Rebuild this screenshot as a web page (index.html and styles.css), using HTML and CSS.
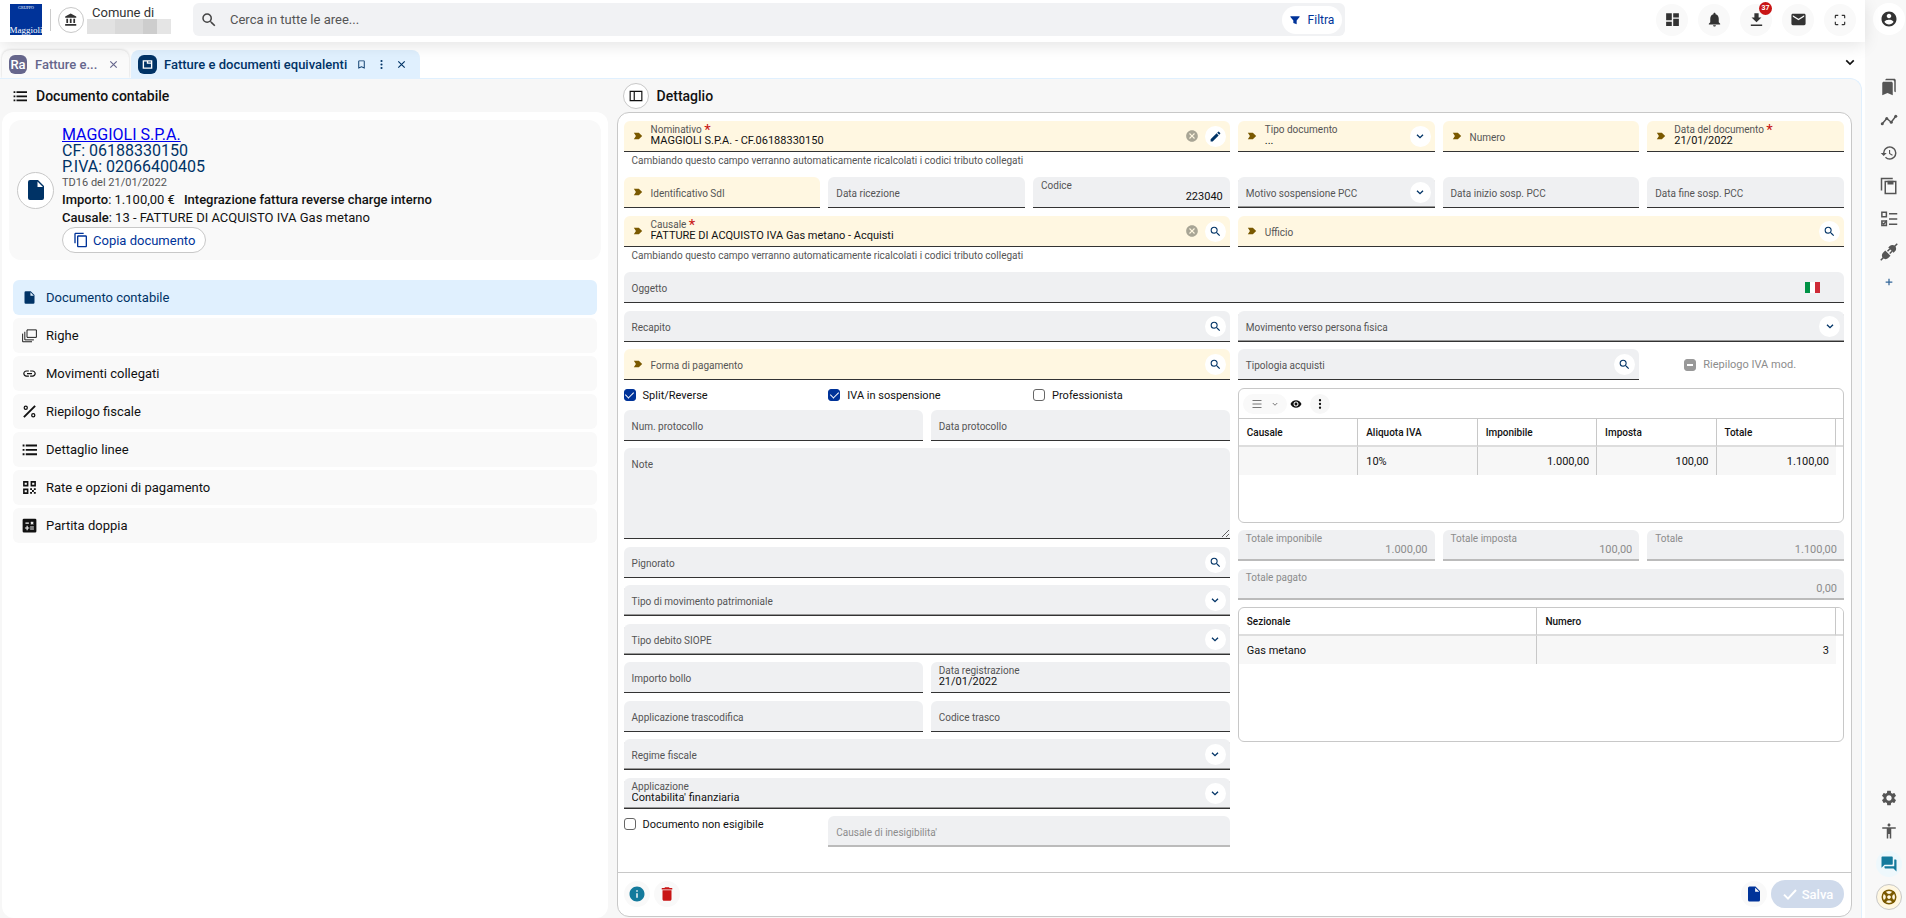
FILE: index.html
```html
<!DOCTYPE html>
<html lang="it">
<head>
    <meta charset="UTF-8">
    <meta name="viewport" content="width=device-width, initial-scale=1.0">
    <title>Fatture e documenti equivalenti</title>
    <link rel="stylesheet" href="styles.css">
</head>
<body>

    <!-- Icone -->
    <svg class="sprite" aria-hidden="true">
        <symbol id="i-search" viewBox="0 0 24 24"><path d="M15.5 14h-.79l-.28-.27A6.471 6.471 0 0 0 16 9.5 6.5 6.5 0 1 0 9.5 16c1.61 0 3.09-.59 4.23-1.57l.27.28v.79l5 4.99L20.49 19l-4.99-5zm-6 0C7.01 14 5 11.99 5 9.5S7.01 5 9.5 5 14 7.01 14 9.5 11.99 14 9.5 14z"/></symbol>
        <symbol id="i-bank" viewBox="0 0 24 24"><path d="M4 10v7h3v-7H4zm6 0v7h3v-7h-3zM2 22h19v-3H2v3zm14-12v7h3v-7h-3zm-4.500-9L2 6v2h19V6l-9.500-5z"/></symbol>
        <symbol id="i-filter" viewBox="0 0 24 24"><path d="M1 3h22v2l-7 8v9l-8-3v-6L1 5z"/></symbol>
        <symbol id="i-dashboard" viewBox="0 0 24 24"><path d="M3 13h8V3H3v10zm0 8h8v-6H3v6zm10 0h8V11h-8v10zm0-18v6h8V3h-8z"/></symbol>
        <symbol id="i-bell" viewBox="0 0 24 24"><path d="M12 22c1.100 0 2-.9 2-2h-4c0 1.100.89 2 2 2zm6-6v-5c0-3.070-1.640-5.640-4.500-6.320V4c0-.83-.67-1.500-1.500-1.500s-1.500.67-1.500 1.500v.68C7.630 5.360 6 7.920 6 11v5l-2 2v1h16v-1l-2-2z"/></symbol>
        <symbol id="i-download" viewBox="0 0 24 24"><path d="M19 9h-4V3H9v6H5l7 7 7-7zM4 19v2h16v-2H4z"/></symbol>
        <symbol id="i-mail" viewBox="0 0 24 24"><path d="M20 4H4c-1.100 0-1.990.9-1.990 2L2 18c0 1.100.9 2 2 2h16c1.100 0 2-.9 2-2V6c0-1.100-.9-2-2-2zm0 4l-8 5-8-5V6l8 5 8-5v2z"/></symbol>
        <symbol id="i-fullscreen" viewBox="0 0 24 24"><path d="M3 5v4h2V5h4V3H5c-1.100 0-2 .9-2 2zm2 10H3v4c0 1.100.9 2 2 2h4v-2H5v-4zm14 4h-4v2h4c1.100 0 2-.9 2-2v-4h-2v4zm0-16h-4v2h4v4h2V5c0-1.100-.9-2-2-2z"/></symbol>
        <symbol id="i-user" viewBox="0 0 24 24"><path d="M12 2C6.480 2 2 6.480 2 12s4.480 10 10 10 10-4.480 10-10S17.520 2 12 2zm0 3c1.660 0 3 1.340 3 3s-1.340 3-3 3-3-1.340-3-3 1.340-3 3-3zm0 14.200c-2.500 0-4.710-1.280-6-3.220.03-1.990 4-3.080 6-3.080 1.990 0 5.970 1.090 6 3.080-1.290 1.940-3.500 3.220-6 3.220z"/></symbol>
        <symbol id="i-bookmarks" viewBox="0 0 24 24"><path d="M19 18l2 1V3c0-1.100-.9-2-2-2H8.990C7.890 1 7 1.900 7 3h10c1.100 0 2 .9 2 2v13zM15 5H5c-1.100 0-2 .9-2 2v16l7-3 7 3V7c0-1.100-.9-2-2-2z"/></symbol>
        <symbol id="i-timeline" viewBox="0 0 24 24"><path d="M3 17l6-7 6 5 6-8" fill="none" stroke="currentColor" stroke-width="2"/><circle cx="3" cy="17" r="2"/><circle cx="9" cy="10" r="2"/><circle cx="15" cy="15" r="2"/><circle cx="21" cy="7" r="2"/></symbol>
        <symbol id="i-history" viewBox="0 0 24 24"><path d="M13 3a9 9 0 0 0-9 9H1l3.890 3.890.07.14L9 12H6c0-3.870 3.130-7 7-7s7 3.130 7 7-3.130 7-7 7c-1.930 0-3.680-.79-4.940-2.060l-1.420 1.420A8.954 8.954 0 0 0 13 21a9 9 0 0 0 0-18zm-1 5v5l4.280 2.540.72-1.210-3.500-2.080V8H12z"/></symbol>
        <symbol id="i-paste" viewBox="0 0 24 24"><path d="M2 18V2h15M7 6h14v16H7z" fill="none" stroke="currentColor" stroke-width="2"/><path d="M10 5h8v5h-8z"/></symbol>
        <symbol id="i-checklist" viewBox="0 0 24 24"><path d="M2.500 3h6v6h-6zM2.500 14.500h6v6h-6z" fill="none" stroke="currentColor" stroke-width="2"/><path d="M12 5h11M12 12h11M12 19h11" stroke="currentColor" stroke-width="2"/><path d="M3 17l2 2 4-5" fill="none" stroke="currentColor" stroke-width="2"/></symbol>
        <symbol id="i-plug" viewBox="0 0 24 24"><path d="M1 23l4-4M19 5l4-4M10 11l3-3M13 14l3-3" stroke="currentColor" stroke-width="2"/><path d="M4 13l3-3 7 7-3 3c-2 2-5 2-7 0s-2-5 0-7zM13 4c2-2 5-2 7 0s2 5 0 7l-2 2-7-7z"/></symbol>
        <symbol id="i-plus" viewBox="0 0 24 24"><path d="M12 4v16M4 12h16" stroke="currentColor" stroke-width="3"/></symbol>
        <symbol id="i-settings" viewBox="0 0 24 24"><path d="M19.140 12.940c.04-.3.06-.61.06-.94 0-.32-.02-.64-.07-.94l2.030-1.580c.18-.14.23-.41.12-.61l-1.920-3.320c-.12-.22-.37-.29-.59-.22l-2.390.96c-.5-.38-1.030-.7-1.620-.94l-.36-2.540c-.04-.24-.24-.41-.48-.41h-3.840c-.24 0-.43.17-.47.41l-.36 2.540c-.59.24-1.130.57-1.620.94l-2.390-.96c-.22-.08-.47 0-.59.22L2.740 8.870c-.12.21-.08.47.12.61l2.030 1.580c-.05.3-.09.63-.09.94s.02.64.07.94l-2.030 1.580c-.18.14-.23.41-.12.61l1.920 3.320c.12.22.37.29.59.22l2.390-.96c.5.38 1.030.7 1.620.94l.36 2.540c.05.24.24.41.48.41h3.840c.24 0 .44-.17.47-.41l.36-2.540c.59-.24 1.130-.56 1.620-.94l2.390.96c.22.08.47 0 .59-.22l1.920-3.320c.12-.22.07-.47-.12-.61l-2.010-1.580zM12 15.600c-1.980 0-3.600-1.620-3.600-3.600s1.620-3.600 3.600-3.600 3.600 1.620 3.600 3.600-1.620 3.600-3.600 3.600z"/></symbol>
        <symbol id="i-person" viewBox="0 0 24 24"><path d="M12 2c1.100 0 2 .9 2 2s-.9 2-2 2-2-.9-2-2 .9-2 2-2zm9 7h-6v13h-2v-6h-2v6H9V9H3V7h18v2z"/></symbol>
        <symbol id="i-forum" viewBox="0 0 24 24"><path d="M21 6h-2v9H6v2c0 .55.45 1 1 1h11l4 4V7c0-.55-.45-1-1-1zm-4 6V3c0-.55-.45-1-1-1H3c-.55 0-1 .45-1 1v14l4-4h10c.55 0 1-.45 1-1z"/></symbol>
        <symbol id="i-support" viewBox="0 0 24 24"><circle cx="12" cy="12" r="9" fill="none" stroke="currentColor" stroke-width="2"/><circle cx="12" cy="12" r="3.500" fill="none" stroke="currentColor" stroke-width="2"/><path d="M5 5l5 5M19 5l-5 5M5 19l5-5M19 19l-5-5" stroke="currentColor" stroke-width="4"/></symbol>
        <symbol id="i-file" viewBox="0 0 24 24"><path fill-rule="evenodd" d="M6 2a2 2 0 0 0-2 2v16a2 2 0 0 0 2 2h12a2 2 0 0 0 2-2V8l-6-6H6zm7.500 1.500V9H19z"/></symbol>
        <symbol id="i-link" viewBox="0 0 24 24"><path d="M3.900 12c0-1.710 1.390-3.100 3.100-3.100h4V7H7c-2.760 0-5 2.240-5 5s2.240 5 5 5h4v-1.900H7c-1.710 0-3.100-1.390-3.100-3.100zM8 13h8v-2H8v2zm9-6h-4v1.900h4c1.710 0 3.100 1.390 3.100 3.100s-1.390 3.100-3.100 3.100h-4V17h4c2.760 0 5-2.240 5-5s-2.240-5-5-5z"/></symbol>
        <symbol id="i-layers" viewBox="0 0 24 24"><path d="M8 3h15v12H8zM4.500 6v13H19M1 9v13h15" fill="none" stroke="currentColor" stroke-width="1.500"/></symbol>
        <symbol id="i-percent" viewBox="0 0 24 24"><path d="M21 3L3 21" stroke="currentColor" stroke-width="3"/><circle cx="6" cy="6" r="2.500" fill="none" stroke="currentColor" stroke-width="2"/><circle cx="18" cy="18" r="2.500" fill="none" stroke="currentColor" stroke-width="2"/></symbol>
        <symbol id="i-list" viewBox="0 0 24 24"><path d="M1 4h3v3H1zm5 0h18v3H6zM1 11h3v3H1zm5 0h18v3H6zM1 18h3v3H1zm5 0h18v3H6z"/></symbol>
        <symbol id="i-qr" viewBox="0 0 24 24"><path d="M3 3h6v6H3zM15 3h6v6h-6zM3 15h6v6H3z" fill="none" stroke="currentColor" stroke-width="2.500"/><path d="M13 13h3v3h-3zM19 13h3v3h-3zM16 16h3v3h-3zM13 19h3v3h-3zM19 19h3v3h-3z"/></symbol>
        <symbol id="i-calc" viewBox="0 0 24 24"><path fill-rule="evenodd" d="M3 1h18a2 2 0 0 1 2 2v18a2 2 0 0 1-2 2H3a2 2 0 0 1-2-2V3a2 2 0 0 1 2-2zm2.500 6v2h5.500V7zM13 13.500v1.700h6v-1.700zm0 3.300v1.700h6v-1.700zM7.300 12.500v2.600H4.700v1.800h2.600v2.600h1.800v-2.600h2.600v-1.800H9.100v-2.600zM13.500 6.600l1.500 1.400-1.500 1.400 1.200 1.200 1.400-1.400 1.400 1.400 1.200-1.200L17.300 8l1.400-1.400-1.200-1.200-1.400 1.400-1.400-1.400z"/></symbol>
        <symbol id="i-copy" viewBox="0 0 24 24"><path d="M16 1H4c-1.100 0-2 .9-2 2v14h2V3h12V1zm3 4H8c-1.100 0-2 .9-2 2v14c0 1.100.9 2 2 2h11c1.100 0 2-.9 2-2V7c0-1.100-.9-2-2-2zm0 16H8V7h11v14z"/></symbol>
        <symbol id="i-bookmark" viewBox="0 0 24 24"><path d="M17 3H7c-1.100 0-2 .9-2 2v16l7-3 7 3V5c0-1.100-.9-2-2-2zm0 15l-5-2.180L7 18V5h10v13z"/></symbol>
        <symbol id="i-dots" viewBox="0 0 24 24"><circle cx="12" cy="4.500" r="2.300"/><circle cx="12" cy="12" r="2.300"/><circle cx="12" cy="19.500" r="2.300"/></symbol>
        <symbol id="i-close" viewBox="0 0 24 24"><path d="M5 5l14 14M19 5L5 19" stroke="currentColor" stroke-width="2.500"/></symbol>
        <symbol id="i-chevron" viewBox="0 0 24 24"><path d="M3 8l9 9 9-9" fill="none" stroke="currentColor" stroke-width="4"/></symbol>
        <symbol id="i-panel" viewBox="0 0 24 24"><path d="M2 4h20v16H2zM9 4v16" fill="none" stroke="currentColor" stroke-width="2"/></symbol>
        <symbol id="i-mark" viewBox="0 0 24 24"><path d="M2 4h12l8 8-8 8H2l5-8z"/></symbol>
        <symbol id="i-cancel" viewBox="0 0 24 24"><path d="M12 2C6.470 2 2 6.470 2 12s4.470 10 10 10 10-4.470 10-10S17.530 2 12 2zm5 13.590L15.590 17 12 13.410 8.410 17 7 15.590 10.590 12 7 8.410 8.410 7 12 10.590 15.590 7 17 8.410 13.410 12 17 15.590z"/></symbol>
        <symbol id="i-edit" viewBox="0 0 24 24"><path d="M3 17.250V21h3.750L17.810 9.940l-3.750-3.750L3 17.250zM20.710 7.040a.996.996 0 0 0 0-1.410l-2.340-2.340a.996.996 0 0 0-1.410 0l-1.830 1.830 3.750 3.750 1.830-1.830z"/></symbol>
        <symbol id="i-menu" viewBox="0 0 24 24"><path d="M3 5h18M3 12h18M3 19h18" stroke="currentColor" stroke-width="2"/></symbol>
        <symbol id="i-eye" viewBox="0 0 24 24"><path d="M12 4.500C7 4.500 2.730 7.610 1 12c1.730 4.390 6 7.500 11 7.500s9.270-3.110 11-7.500c-1.730-4.390-6-7.500-11-7.500zM12 17c-2.760 0-5-2.240-5-5s2.240-5 5-5 5 2.240 5 5-2.240 5-5 5zm0-8c-1.660 0-3 1.340-3 3s1.340 3 3 3 3-1.340 3-3-1.340-3-3-3z"/></symbol>
        <symbol id="i-info" viewBox="0 0 24 24"><path d="M12 2C6.480 2 2 6.480 2 12s4.480 10 10 10 10-4.480 10-10S17.520 2 12 2zm1 15h-2v-6h2v6zm0-8h-2V7h2v2z"/></symbol>
        <symbol id="i-delete" viewBox="0 0 24 24"><path d="M6 19c0 1.100.9 2 2 2h8c1.100 0 2-.9 2-2V7H6v12zM19 4h-3.500l-1-1h-5l-1 1H5v2h14V4z"/></symbol>
        <symbol id="i-check" viewBox="0 0 24 24"><path d="M3 13l6 6L21 6" fill="none" stroke="currentColor" stroke-width="3"/></symbol>
        <symbol id="i-window" viewBox="0 0 24 24"><path d="M3 4h18v16H3zM12 4v5h9" fill="none" stroke="currentColor" stroke-width="3"/></symbol>
    </svg>

    <div class="app">
        <div class="workspace">

            <!-- Barra superiore -->
            <header class="topbar">
                <div class="logo"><small>GRUPPO</small><span>Maggioli</span></div>
                <span class="divider"></span>
                <button type="button" class="round bank" aria-label="Ente"><svg><use href="#i-bank"/></svg></button>
                <div class="ente">
                    <span>Comune di</span>
                    <div class="redacted"><i></i><i></i><i></i><i></i></div>
                </div>
                <div class="searchbar">
                    <svg><use href="#i-search"/></svg>
                    <input type="search" placeholder="Cerca in tutte le aree..." aria-label="Cerca">
                    <button type="button" class="filtra"><svg><use href="#i-filter"/></svg>Filtra</button>
                </div>
                <nav class="top-actions">
                    <button type="button" aria-label="Dashboard"><svg><use href="#i-dashboard"/></svg></button>
                    <button type="button" aria-label="Notifiche"><svg><use href="#i-bell"/></svg></button>
                    <button type="button" aria-label="Download"><svg><use href="#i-download"/></svg><span class="badge">37</span></button>
                    <button type="button" aria-label="Posta"><svg><use href="#i-mail"/></svg></button>
                    <button type="button" aria-label="Schermo intero"><svg class="small"><use href="#i-fullscreen"/></svg></button>
                </nav>
            </header>

            <!-- Schede -->
            <div class="tabs">
                <div class="tab">
                    <span class="app-icon ra">Ra</span>
                    <a href="#">Fatture e...</a>
                    <button type="button" aria-label="Chiudi"><svg><use href="#i-close"/></svg></button>
                </div>
                <div class="tab active">
                    <span class="app-icon"><svg><use href="#i-window"/></svg></span>
                    <a href="#">Fatture e documenti equivalenti</a>
                    <button type="button" aria-label="Segnalibro"><svg><use href="#i-bookmark"/></svg></button>
                    <button type="button" aria-label="Altro"><svg><use href="#i-dots"/></svg></button>
                    <button type="button" aria-label="Chiudi"><svg><use href="#i-close"/></svg></button>
                </div>
                <button type="button" class="tabs-more" aria-label="Altre schede"><svg><use href="#i-chevron"/></svg></button>
            </div>

            <main class="content">

                <!-- Colonna sinistra -->
                <section class="side">
                    <h2><svg><use href="#i-list"/></svg>Documento contabile</h2>
                    <div class="side-panel">
                        <div class="summary">
                            <span class="round doc"><svg><use href="#i-file"/></svg></span>
                            <div class="summary-text">
                                <div class="name"><a href="#">MAGGIOLI S.P.A.</a></div>
                                <div class="name">CF: 06188330150</div>
                                <div class="name">P.IVA: 02066400405</div>
                                <div class="sub">TD16 del 21/01/2022</div>
                                <div class="line"><span><b>Importo</b>: 1.100,00 €</span><b>Integrazione fattura reverse charge interno</b></div>
                                <div class="line"><span><b>Causale</b>: 13 - FATTURE DI ACQUISTO IVA Gas metano</span></div>
                                <button type="button" class="copia"><svg><use href="#i-copy"/></svg>Copia documento</button>
                            </div>
                        </div>
                        <nav class="menu">
                            <a href="#" class="current"><svg><use href="#i-file"/></svg>Documento contabile</a>
                            <a href="#"><svg><use href="#i-layers"/></svg>Righe</a>
                            <a href="#"><svg><use href="#i-link"/></svg>Movimenti collegati</a>
                            <a href="#"><svg><use href="#i-percent"/></svg>Riepilogo fiscale</a>
                            <a href="#"><svg><use href="#i-list"/></svg>Dettaglio linee</a>
                            <a href="#"><svg><use href="#i-qr"/></svg>Rate e opzioni di pagamento</a>
                            <a href="#"><svg><use href="#i-calc"/></svg>Partita doppia</a>
                        </nav>
                    </div>
                </section>

                <!-- Dettaglio -->
                <section class="detail">
                    <h2><button type="button" class="round" aria-label="Pannello"><svg><use href="#i-panel"/></svg></button>Dettaglio</h2>
                    <form class="detail-panel">
                        <div class="form-body">

                            <div class="group">
                                <div class="cols-2">
                                    <div>
                                        <div class="field key filled">
                                            <svg class="mark"><use href="#i-mark"/></svg>
                                            <div class="body"><label for="nominativo">Nominativo <em>*</em></label><input type="text" id="nominativo" value="MAGGIOLI S.P.A. - CF.06188330150"></div>
                                            <button type="button" class="clear" aria-label="Cancella"><svg><use href="#i-cancel"/></svg></button>
                                            <button type="button" class="act" aria-label="Modifica"><svg><use href="#i-edit"/></svg></button>
                                        </div>
                                        <p class="hint">Cambiando questo campo verranno automaticamente ricalcolati i codici tributo collegati</p>
                                    </div>
                                    <div class="cols-3">
                                        <div class="field key filled">
                                            <svg class="mark"><use href="#i-mark"/></svg>
                                            <div class="body"><label for="tipodoc">Tipo documento</label><select id="tipodoc"><option>...</option></select></div>
                                            <span class="act"><svg class="chev"><use href="#i-chevron"/></svg></span>
                                        </div>
                                        <div class="field key">
                                            <svg class="mark"><use href="#i-mark"/></svg>
                                            <div class="body"><label for="numero">Numero</label><input type="text" id="numero"></div>
                                        </div>
                                        <div class="field key filled">
                                            <svg class="mark"><use href="#i-mark"/></svg>
                                            <div class="body"><label for="datadoc">Data del documento <em>*</em></label><input type="text" id="datadoc" value="21/01/2022"></div>
                                        </div>
                                    </div>
                                </div>
                                <div class="cols-2">
                                    <div class="cols-3">
                                        <div class="field key">
                                            <svg class="mark"><use href="#i-mark"/></svg>
                                            <div class="body"><label for="sdi">Identificativo SdI</label><input type="text" id="sdi"></div>
                                        </div>
                                        <div class="field"><div class="body"><label for="ricezione">Data ricezione</label><input type="text" id="ricezione"></div></div>
                                        <div class="field filled number"><div class="body"><label for="codice">Codice</label><input type="text" id="codice" value="223040"></div></div>
                                    </div>
                                    <div class="cols-3">
                                        <div class="field select">
                                            <div class="body"><label for="motivo">Motivo sospensione PCC</label><select id="motivo"><option></option></select></div>
                                            <span class="act"><svg class="chev"><use href="#i-chevron"/></svg></span>
                                        </div>
                                        <div class="field"><div class="body"><label for="inizio">Data inizio sosp. PCC</label><input type="text" id="inizio"></div></div>
                                        <div class="field"><div class="body"><label for="fine">Data fine sosp. PCC</label><input type="text" id="fine"></div></div>
                                    </div>
                                </div>
                            </div>

                            <div class="group">
                                <div class="cols-2">
                                    <div>
                                        <div class="field key filled">
                                            <svg class="mark"><use href="#i-mark"/></svg>
                                            <div class="body"><label for="causale">Causale <em>*</em></label><input type="text" id="causale" value="FATTURE DI ACQUISTO IVA Gas metano - Acquisti"></div>
                                            <button type="button" class="clear" aria-label="Cancella"><svg><use href="#i-cancel"/></svg></button>
                                            <button type="button" class="act" aria-label="Cerca"><svg><use href="#i-search"/></svg></button>
                                        </div>
                                        <p class="hint">Cambiando questo campo verranno automaticamente ricalcolati i codici tributo collegati</p>
                                    </div>
                                    <div class="field key">
                                        <svg class="mark"><use href="#i-mark"/></svg>
                                        <div class="body"><label for="ufficio">Ufficio</label><input type="text" id="ufficio"></div>
                                        <button type="button" class="act" aria-label="Cerca"><svg><use href="#i-search"/></svg></button>
                                    </div>
                                </div>
                                <div class="field">
                                    <div class="body"><label for="oggetto">Oggetto</label><input type="text" id="oggetto"></div>
                                    <span class="flag"></span>
                                </div>
                            </div>

                            <div class="cols-2">
                                <div class="stack">
                                    <div class="group">
                                        <div class="field">
                                            <div class="body"><label for="recapito">Recapito</label><input type="text" id="recapito"></div>
                                            <button type="button" class="act" aria-label="Cerca"><svg><use href="#i-search"/></svg></button>
                                        </div>
                                        <div class="field key">
                                            <svg class="mark"><use href="#i-mark"/></svg>
                                            <div class="body"><label for="forma">Forma di pagamento</label><input type="text" id="forma"></div>
                                            <button type="button" class="act" aria-label="Cerca"><svg><use href="#i-search"/></svg></button>
                                        </div>
                                        <div class="cols-3">
                                            <label class="check"><input type="checkbox" checked>Split/Reverse</label>
                                            <label class="check"><input type="checkbox" checked>IVA in sospensione</label>
                                            <label class="check"><input type="checkbox">Professionista</label>
                                        </div>
                                        <div class="cols-2">
                                            <div class="field"><div class="body"><label for="numprot">Num. protocollo</label><input type="text" id="numprot"></div></div>
                                            <div class="field"><div class="body"><label for="dataprot">Data protocollo</label><input type="text" id="dataprot"></div></div>
                                        </div>
                                        <div class="field note"><div class="body"><label for="note">Note</label><textarea id="note"></textarea></div></div>
                                    </div>
                                    <div class="group">
                                        <div class="field">
                                            <div class="body"><label for="pignorato">Pignorato</label><input type="text" id="pignorato"></div>
                                            <button type="button" class="act" aria-label="Cerca"><svg><use href="#i-search"/></svg></button>
                                        </div>
                                        <div class="field select">
                                            <div class="body"><label for="patrimoniale">Tipo di movimento patrimoniale</label><select id="patrimoniale"><option></option></select></div>
                                            <span class="act"><svg class="chev"><use href="#i-chevron"/></svg></span>
                                        </div>
                                    </div>
                                    <div class="group">
                                        <div class="field select">
                                            <div class="body"><label for="siope">Tipo debito SIOPE</label><select id="siope"><option></option></select></div>
                                            <span class="act"><svg class="chev"><use href="#i-chevron"/></svg></span>
                                        </div>
                                        <div class="cols-2">
                                            <div class="field"><div class="body"><label for="bollo">Importo bollo</label><input type="text" id="bollo"></div></div>
                                            <div class="field filled"><div class="body"><label for="datareg">Data registrazione</label><input type="text" id="datareg" value="21/01/2022"></div></div>
                                        </div>
                                    </div>
                                    <div class="group">
                                        <div class="cols-2">
                                            <div class="field"><div class="body"><label for="trascodifica">Applicazione trascodifica</label><input type="text" id="trascodifica"></div></div>
                                            <div class="field"><div class="body"><label for="trasco">Codice trasco</label><input type="text" id="trasco"></div></div>
                                        </div>
                                        <div class="field select">
                                            <div class="body"><label for="regime">Regime fiscale</label><select id="regime"><option></option></select></div>
                                            <span class="act"><svg class="chev"><use href="#i-chevron"/></svg></span>
                                        </div>
                                    </div>
                                    <div class="group">
                                        <div class="field select filled">
                                            <div class="body"><label for="applicazione">Applicazione</label><select id="applicazione"><option>Contabilita' finanziaria</option></select></div>
                                            <span class="act"><svg class="chev"><use href="#i-chevron"/></svg></span>
                                        </div>
                                        <div class="cols-3">
                                            <label class="check"><input type="checkbox">Documento non esigibile</label>
                                            <div class="field off wide"><div class="body"><label for="inesig">Causale di inesigibilita'</label><input type="text" id="inesig" disabled></div></div>
                                        </div>
                                    </div>
                                </div>

                                <div class="stack">
                                    <div class="group">
                                        <div class="field select">
                                            <div class="body"><label for="persona">Movimento verso persona fisica</label><select id="persona"><option></option></select></div>
                                            <span class="act"><svg class="chev"><use href="#i-chevron"/></svg></span>
                                        </div>
                                        <div class="cols-3">
                                            <div class="field wide">
                                                <div class="body"><label for="tipologia">Tipologia acquisti</label><input type="text" id="tipologia"></div>
                                                <button type="button" class="act" aria-label="Cerca"><svg><use href="#i-search"/></svg></button>
                                            </div>
                                            <label class="check riepilogo"><input type="checkbox" class="mixed" disabled>Riepilogo IVA mod.</label>
                                        </div>
                                    </div>
                                    <div class="group">
                                        <div class="box">
                                            <div class="toolbar">
                                                <button type="button" class="pill" aria-label="Vista"><svg><use href="#i-menu"/></svg><svg class="chev"><use href="#i-chevron"/></svg></button>
                                                <button type="button" aria-label="Mostra"><svg><use href="#i-eye"/></svg></button>
                                                <button type="button" class="more" aria-label="Altro"><svg><use href="#i-dots"/></svg></button>
                                            </div>
                                            <table>
                                                <thead><tr><th>Causale</th><th>Aliquota IVA</th><th>Imponibile</th><th>Imposta</th><th>Totale</th><td class="fill"></td></tr></thead>
                                                <tbody><tr><td></td><td>10%</td><td class="num">1.000,00</td><td class="num">100,00</td><td class="num">1.100,00</td><td class="fill"></td></tr></tbody>
                                            </table>
                                        </div>
                                        <div class="cols-3">
                                            <div class="field off filled number"><div class="body"><label for="totimp">Totale imponibile</label><input type="text" id="totimp" value="1.000,00" disabled></div></div>
                                            <div class="field off filled number"><div class="body"><label for="totiva">Totale imposta</label><input type="text" id="totiva" value="100,00" disabled></div></div>
                                            <div class="field off filled number"><div class="body"><label for="totale">Totale</label><input type="text" id="totale" value="1.100,00" disabled></div></div>
                                        </div>
                                    </div>
                                    <div class="group">
                                        <div class="field off filled number"><div class="body"><label for="pagato">Totale pagato</label><input type="text" id="pagato" value="0,00" disabled></div></div>
                                        <div class="box">
                                            <table>
                                                <thead><tr><th>Sezionale</th><th>Numero</th><td class="fill"></td></tr></thead>
                                                <tbody><tr><td>Gas metano</td><td class="num">3</td><td class="fill"></td></tr></tbody>
                                            </table>
                                        </div>
                                    </div>
                                </div>
                            </div>
                        </div>

                        <footer class="form-footer">
                            <button type="button" class="foot info" aria-label="Informazioni"><svg><use href="#i-info"/></svg></button>
                            <button type="button" class="foot delete" aria-label="Elimina"><svg><use href="#i-delete"/></svg></button>
                            <button type="button" class="foot new" aria-label="Nuovo"><svg><use href="#i-file"/></svg></button>
                            <button type="submit" class="salva" disabled><svg><use href="#i-check"/></svg>Salva</button>
                        </footer>
                    </form>
                </section>
            </main>
        </div>

        <!-- Barra laterale destra -->
        <aside class="rail">
            <button type="button" class="user" aria-label="Profilo"><svg><use href="#i-user"/></svg></button>
            <div class="rail-list">
                <button type="button" aria-label="Segnalibri"><svg><use href="#i-bookmarks"/></svg></button>
                <button type="button" aria-label="Andamento"><svg><use href="#i-timeline"/></svg></button>
                <button type="button" aria-label="Cronologia"><svg><use href="#i-history"/></svg></button>
                <button type="button" aria-label="Appunti"><svg><use href="#i-paste"/></svg></button>
                <button type="button" aria-label="Attività"><svg><use href="#i-checklist"/></svg></button>
                <button type="button" aria-label="Connessioni"><svg><use href="#i-plug"/></svg></button>
                <button type="button" class="add" aria-label="Aggiungi"><svg><use href="#i-plus"/></svg></button>
            </div>
            <div class="rail-list bottom">
                <button type="button" aria-label="Impostazioni"><svg><use href="#i-settings"/></svg></button>
                <button type="button" aria-label="Accessibilità"><svg><use href="#i-person"/></svg></button>
                <button type="button" class="chat" aria-label="Chat"><svg><use href="#i-forum"/></svg></button>
                <button type="button" class="help" aria-label="Supporto"><svg><use href="#i-support"/></svg></button>
            </div>
        </aside>
    </div>

</body>
</html>
```
FILE: styles.css
```css
* {
    margin: 0;
    padding: 0;
    box-sizing: border-box;
}

body {
    font-family: Roboto, "Liberation Sans", sans-serif;
    font-size: 12px;
    color: #111;
    background: #fff;
}

button {
    border: none;
    background: none;
    font: inherit;
    color: inherit;
    display: flex;
    align-items: center;
    justify-content: center;
    cursor: pointer;
}

input, select, textarea {
    font: inherit;
    color: inherit;
    border: none;
    background: none;
    outline: none;
    min-width: 0;
}

svg {
    width: 16px;
    height: 16px;
    fill: currentColor;
    flex: none;
}

.sprite {
    display: none;
}

.app {
    display: flex;
    min-height: 100vh;
}

.workspace {
    flex: 1;
    min-width: 0;
    display: flex;
    flex-direction: column;
}

/* Barra superiore */
.topbar {
    height: 42px;
    display: flex;
    align-items: center;
    padding: 0 9px 3px 10px;
    box-shadow: 0 4px 16px rgba(0, 0, 0, 0.1);
    position: relative;
    z-index: 1;
}

.logo {
    width: 32px;
    height: 31px;
    background: #003399;
    color: #fff;
    display: flex;
    flex-direction: column;
    justify-content: space-between;
    align-items: center;
    font-family: "Liberation Serif", serif;
    font-size: 9px;
    line-height: 10px;
    overflow: hidden;
}

.logo small {
    font-size: 4px;
    line-height: 8px;
}

.divider {
    width: 1px;
    height: 22px;
    background: #ccc;
    margin: 0 7px 0 8px;
}

.round {
    width: 26px;
    height: 26px;
    border: 1px solid #c8c8c8;
    border-radius: 50%;
    background: #fff;
    display: flex;
    align-items: center;
    justify-content: center;
    flex: none;
}

.bank svg {
    width: 14px;
    height: 14px;
    color: #333;
}

.ente {
    width: 84px;
    margin-left: 3px;
    margin-right: 22px;
    color: #333;
    padding-top: 1px;
}

.ente span {
    display: block;
    padding-left: 5px;
    font-size: 13px;
    line-height: 12px;
}

.redacted {
    height: 15px;
    display: flex;
}

.redacted i {
    flex: 1;
    background: #e5e5e5;
}

.redacted i:nth-child(1) {
    flex: 2;
    background: #e2e2e2;
}

.redacted i:nth-child(2) {
    flex: 2;
    background: #d9d9d9;
}

.redacted i:nth-child(3) {
    background: #cdcdcd;
}

.searchbar {
    flex: 0 1 1152px;
    height: 33px;
    background: #f1f2f4;
    border-radius: 6px;
    display: flex;
    align-items: center;
    padding: 0 3px 0 7px;
    color: #444;
}

.searchbar svg {
    width: 18px;
    height: 18px;
}

.searchbar input {
    flex: 1;
    padding-left: 12px;
    font-size: 13px;
}

.searchbar input::placeholder {
    color: #555;
}

.filtra {
    width: 60px;
    height: 28px;
    border-radius: 14px;
    background: #fff;
    color: #003399;
    font-size: 12px;
    gap: 8px;
}

.filtra svg {
    width: 10px;
    height: 10px;
}

.top-actions {
    margin-left: auto;
    display: flex;
    gap: 10px;
}

.top-actions button {
    width: 32px;
    height: 32px;
    border-radius: 50%;
    background: #f9f9f9;
    color: #333;
    position: relative;
}

.top-actions svg {
    width: 17px;
    height: 17px;
}

.top-actions .small {
    width: 14px;
    height: 14px;
}

.badge {
    position: absolute;
    top: -2px;
    right: 0;
    width: 13px;
    height: 13px;
    border-radius: 50%;
    background: #c81414;
    color: #fff;
    font-size: 7px;
    line-height: 13px;
    font-weight: bold;
    text-align: center;
}

/* Schede */
.tabs {
    height: 36px;
    display: flex;
    align-items: flex-end;
    gap: 2px;
    padding-left: 2px;
}

.tab {
    height: 28px;
    display: flex;
    align-items: center;
    border-radius: 8px 8px 0 0;
    background: #fafafa;
    box-shadow: 0 0 3px rgba(0, 0, 0, 0.2);
    color: #66668c;
    font-size: 13px;
    font-weight: 500;
    padding: 0 10px 0 7px;
    width: 127px;
}

.tab a {
    color: inherit;
    text-decoration: none;
    flex: 1;
    white-space: nowrap;
}

.tab svg {
    width: 11px;
    height: 11px;
}

.tab.active {
    background: #e0f0fe;
    color: #003366;
    width: 289px;
    box-shadow: none;
    padding-right: 13px;
}

.tab button + button {
    margin-left: 9px;
}

.app-icon {
    width: 19px;
    height: 19px;
    border-radius: 6px;
    background: #003366;
    color: #fff;
    display: flex;
    align-items: center;
    justify-content: center;
    margin-right: 7px;
}

.app-icon.ra {
    width: 18px;
    background: #66668c;
    font-size: 13px;
    margin-right: 8px;
}

.tabs-more {
    margin-left: auto;
    margin-right: 10px;
    height: 33px;
    color: #111;
}

.tabs-more svg {
    width: 10px;
    height: 10px;
}

/* Contenuto */
.content {
    flex: 1;
    display: grid;
    grid-template-columns: minmax(0, 100fr) minmax(0, 204fr);
    gap: 9px;
    padding: 0 9px 0 2px;
    margin-right: 3px;
    background: #f7f7f7;
    border: 1px solid #e0f0fe;
    border-width: 1px 1px 0 0;
    border-radius: 0 12px 0 0;
}

.side, .detail {
    display: flex;
    flex-direction: column;
}

h2 {
    height: 33px;
    display: flex;
    align-items: center;
    font-size: 14px;
    font-weight: 500;
    padding-left: 11px;
    gap: 9px;
}

h2 svg {
    width: 14px;
    height: 14px;
}

.detail h2 {
    padding-left: 6px;
    gap: 8px;
}

.side-panel {
    flex: 1;
    background: #fff;
    border-radius: 12px;
    padding: 8px 7px;
}

.summary {
    background: #f9f9f9;
    border-radius: 12px;
    height: 140px;
    padding: 6px 8px;
    display: flex;
    align-items: center;
    gap: 8px;
}

.doc {
    width: 37px;
    height: 37px;
    color: #003366;
}

.doc svg {
    width: 24px;
    height: 24px;
}

.name {
    font-size: 16px;
    line-height: 16px;
    color: #003366;
}

.name a {
    color: #0000ee;
}

.sub {
    line-height: 16px;
    color: #555;
    font-size: 11px;
}

.line {
    font-size: 13px;
    line-height: 18px;
    display: flex;
    gap: 9px;
}

.line b {
    font-weight: 500;
}

.copia {
    height: 26px;
    border: 1px solid #c8c8c8;
    border-radius: 13px;
    background: #fff;
    color: #003399;
    font-size: 13px;
    padding: 0 10px;
    gap: 4px;
}

.menu {
    display: flex;
    flex-direction: column;
    gap: 3px;
    padding: 20px 4px 0;
}

.menu a {
    height: 35px;
    border-radius: 6px;
    background: #f9f9f9;
    color: #111;
    text-decoration: none;
    font-size: 13px;
    display: flex;
    align-items: center;
    padding-left: 9px;
    gap: 9px;
}

.menu svg {
    width: 15px;
    height: 15px;
}

.menu .current {
    background: #e0f0fe;
    color: #003366;
}

.detail-panel {
    flex: 1;
    background: #fff;
    border: 1px solid #c8c8c8;
    border-radius: 12px;
    display: flex;
    flex-direction: column;
    margin-bottom: 1px;
}

.form-body {
    flex: 1;
    padding: 8px 7px 0 6px;
    display: flex;
    flex-direction: column;
    gap: 8px;
}

.stack {
    display: flex;
    flex-direction: column;
    gap: 8px;
}

.group {
    display: flex;
    flex-direction: column;
    gap: 7px;
}

.cols-2, .cols-3 {
    display: grid;
    grid-template-columns: repeat(2, minmax(0, 1fr));
    column-gap: 8px;
    align-items: start;
}

.cols-3 {
    grid-template-columns: repeat(3, minmax(0, 1fr));
}

.wide {
    grid-column: span 2;
}

/* Campi */
.field {
    height: 31px;
    display: flex;
    align-items: center;
    background: #eff0f2;
    border-bottom: 1px solid #333;
    border-radius: 6px 6px 0 0;
    padding: 0 7px 0 8px;
}

.field.key {
    background: #fff7e1;
}

.field.select {
    box-shadow: inset 0 -1px #999;
}

.field .body {
    flex: 1;
    min-width: 0;
    display: grid;
    padding-top: 4px;
}

.field .body > * {
    grid-area: 1 / 1;
}

.field label {
    font-size: 10px;
    line-height: 12px;
    color: #555;
    pointer-events: none;
}

.field label em {
    color: #c81414;
    font-size: 15px;
    line-height: 0;
    font-style: normal;
    vertical-align: -2px;
}

.field input, .field select, .field textarea {
    width: 100%;
    height: 12px;
    font-size: 11px;
    line-height: 12px;
}

.field select {
    appearance: none;
}

.field.filled .body {
    padding-top: 0;
}

.field.filled .body > * {
    grid-area: auto;
}

.field.filled label {
    line-height: 10px;
}

.field.number input {
    text-align: right;
}

.field.off {
    color: #8c8c8c;
    border-bottom: 2px solid #bbb;
}

.field.off label {
    color: #8c8c8c;
}

.mark {
    width: 10px;
    height: 10px;
    color: #7a5900;
    margin: 0 8px 0 1px;
}

.clear {
    color: #a8a595;
    margin-right: 3px;
}

.clear svg {
    width: 14px;
    height: 14px;
}

.act {
    width: 21px;
    height: 21px;
    border-radius: 50%;
    background: #fff;
    color: #003366;
    display: flex;
    align-items: center;
    justify-content: center;
    margin-right: -3px;
}

.act svg {
    width: 13px;
    height: 13px;
}

.act .chev {
    width: 8px;
    height: 8px;
}

.clear + .act {
    margin-left: 3px;
}

.flag {
    width: 15px;
    height: 11px;
    margin-right: 17px;
    background: linear-gradient(90deg, #009246 33%, #fff 33% 66%, #ce2b37 66%);
}

.hint {
    font-size: 10px;
    line-height: 18px;
    height: 18px;
    padding-left: 8px;
    color: #555;
    white-space: nowrap;
}

.field.note {
    height: 91px;
    align-items: stretch;
    padding-right: 0;
}

.field.note .body {
    padding-top: 11px;
}

.field.note textarea {
    height: 100%;
    resize: vertical;
}

.check {
    display: flex;
    align-items: center;
    gap: 7px;
    height: 16px;
    font-size: 11px;
}

.check input {
    appearance: none;
    width: 12px;
    height: 12px;
    border: 1px solid #666;
    border-radius: 3px;
    background: #fff;
    display: flex;
    justify-content: center;
}

.check input:checked {
    background: #003399;
    border-color: #003399;
}

.check input:checked::after {
    content: "";
    width: 4px;
    height: 7px;
    border: solid #fff;
    border-width: 0 1px 1px 0;
    transform: rotate(45deg);
}

.check .mixed {
    background: #999;
    border-color: #999;
    align-items: center;
}

.check .mixed::after {
    content: "";
    width: 6px;
    height: 2px;
    background: #fff;
}

.riepilogo {
    height: 31px;
    color: #8c8c8c;
    padding-left: 37px;
}

/* Tabelle */
.box {
    height: 135px;
    border: 1px solid #c8c8c8;
    border-radius: 6px;
    overflow: hidden;
}

.toolbar {
    height: 30px;
    display: flex;
    align-items: center;
    padding-left: 4px;
    border-bottom: 1px solid #c8c8c8;
}

.toolbar svg {
    width: 12px;
    height: 12px;
}

.pill {
    width: 44px;
    height: 20px;
    border-radius: 10px;
    background: #f9f9f9;
    color: #777;
    gap: 9px;
    margin-right: 3px;
}

.pill .chev {
    width: 6px;
    height: 6px;
}

.toolbar .more {
    width: 20px;
    height: 20px;
    border-radius: 50%;
    background: #f7f7f7;
    margin-left: 8px;
}

table {
    width: 100%;
    table-layout: fixed;
    border-collapse: separate;
    border-spacing: 0;
}

th, td {
    height: 28px;
    padding: 0 7px 0 8px;
    border-right: 1px solid #c8c8c8;
    text-align: left;
    font-size: 11px;
}

th {
    font-size: 10px;
    font-weight: 500;
}

thead th, thead td {
    border-bottom: 2px solid #ddd;
}

tbody td {
    background: #f7f7f7;
}

tbody td:nth-last-child(2) {
    border-right: none;
}

.num {
    text-align: right;
}

.fill, tbody .fill {
    width: 7px;
    padding: 0;
    border-right: none;
    background: #fff;
}

/* Piede */
.form-footer {
    height: 44px;
    border-top: 1px solid #c8c8c8;
    display: flex;
    align-items: center;
    padding: 0 7px 1px 6px;
}

.foot {
    width: 26px;
    height: 26px;
    border-radius: 50%;
    background: #f9f9f9;
    margin-right: 4px;
}

.foot svg {
    width: 18px;
    height: 18px;
}

.info {
    color: #147a9c;
}

.delete {
    color: #c81414;
}

.new {
    margin-left: auto;
    color: #003399;
}

.salva {
    width: 73px;
    height: 28px;
    border-radius: 14px;
    background: #cfdaeb;
    color: #fff;
    font-size: 13px;
    font-weight: 500;
    gap: 4px;
}

/* Barra laterale */
.rail {
    width: 41px;
    background: #f8f8f8;
    display: flex;
    flex-direction: column;
    align-items: center;
    padding: 3px 0 8px 7px;
}

.rail button {
    width: 26px;
    height: 26px;
    border-radius: 50%;
    color: #555;
}

.rail svg {
    width: 18px;
    height: 18px;
}

.rail .user {
    width: 32px;
    height: 32px;
    background: #fff;
    color: #333;
}

.rail-list {
    display: flex;
    flex-direction: column;
    gap: 7px;
    margin-top: 39px;
}

.rail-list.bottom {
    margin-top: auto;
}

.rail .add {
    color: #336699;
    height: 20px;
}

.rail .add svg {
    width: 10px;
    height: 10px;
}

.rail .chat {
    background: #eef8fc;
    color: #147a9c;
}

.rail .help {
    background: #fff7e1;
    color: #7a5900;
    border: 1px solid #c8c8c8;
}
```
